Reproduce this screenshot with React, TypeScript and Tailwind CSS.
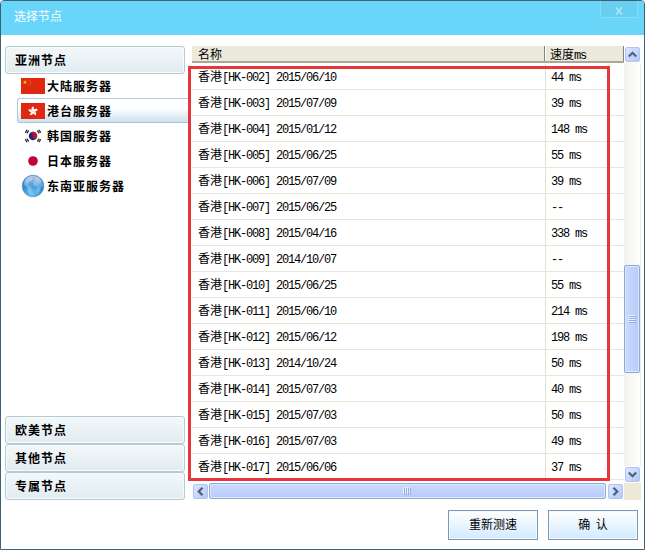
import React from "react";

const rows: [string, string, string][] = [
  ["002", "2015/06/10", "44 ms"],
  ["003", "2015/07/09", "39 ms"],
  ["004", "2015/01/12", "148 ms"],
  ["005", "2015/06/25", "55 ms"],
  ["006", "2015/07/09", "39 ms"],
  ["007", "2015/06/25", "--"],
  ["008", "2015/04/16", "338 ms"],
  ["009", "2014/10/07", "--"],
  ["010", "2015/06/25", "55 ms"],
  ["011", "2015/06/10", "214 ms"],
  ["012", "2015/06/12", "198 ms"],
  ["013", "2014/10/24", "50 ms"],
  ["014", "2015/07/03", "40 ms"],
  ["015", "2015/07/03", "50 ms"],
  ["016", "2015/07/03", "49 ms"],
  ["017", "2015/06/06", "37 ms"],
];

function Mono({ children }: { children: React.ReactNode }) {
  return (
    <span className="whitespace-pre font-['Liberation_Mono',monospace] text-[12px] tracking-[-1.2px]">{children}</span>
  );
}

function GroupHeader({ label }: { label: string }) {
  return (
    <div className="flex h-7 w-[180px] shrink-0 items-center rounded-[3px] border border-[#b5cad3] bg-linear-to-b from-[#f3f8fa] to-[#e1ebf0] pb-px pl-[9px] text-[12px] font-bold tracking-[1px] shadow-[inset_0_0_0_1px_#f8fbfc]">
      {label}
    </div>
  );
}

function ChinaFlag() {
  return (
    <svg width="24" height="16" viewBox="0 0 24 16">
      <rect width="24" height="16" fill="#df2810" />
      <path d="M4 2l.7 1.5 1.6.1-1.2 1 .4 1.6L4 5.3l-1.5.9.4-1.6-1.2-1 1.6-.1z" fill="#f6b515" />
      <path d="M7.5 1.5h1v1h-1zM9 3h1v1H9zM9 5h1v1H9zM7.5 6.5h1v1h-1z" fill="#ec8a18" />
    </svg>
  );
}

function HongKongFlag() {
  return (
    <svg width="24" height="16" viewBox="0 0 24 16">
      <rect width="24" height="16" fill="#df2810" />
      <g fill="#fff" transform="translate(12 8.2)">
        {[0, 72, 144, 216, 288].map((a) => (
          <path key={a} d="M0 0C-2.2-1.5-2-4.2.6-5 .1-3.8 1.6-3 .9-1.2z" transform={`rotate(${a})`} />
        ))}
      </g>
      <g fill="#df2810">
        <circle cx="12" cy="5.8" r=".35" />
        <circle cx="14.1" cy="7.5" r=".35" />
        <circle cx="13.4" cy="10" r=".35" />
        <circle cx="10.6" cy="10" r=".35" />
        <circle cx="9.9" cy="7.5" r=".35" />
      </g>
    </svg>
  );
}

function KoreaFlag() {
  return (
    <svg width="24" height="16" viewBox="0 0 24 16">
      <rect width="24" height="16" fill="#fff" />
      <g transform="rotate(18 12 8)">
        <circle cx="12" cy="8" r="4.2" fill="#142f78" />
        <path d="M7.8 8a4.2 4.2 0 0 1 8.4 0 2.1 2.1 0 0 1-4.2 0 2.1 2.1 0 0 0-4.2 0z" fill="#c8102e" />
      </g>
      <path
        d="M4.2 4.6l2-2.8M5.7 5.4l2-2.8M16.3 2.6l2 2.8M17.8 1.8l2 2.8M4.2 11.4l2 2.8M5.7 10.6l2 2.8M16.3 13.4l2-2.8M17.8 14.2l2-2.8"
        stroke="#111"
        strokeWidth="1.1"
      />
    </svg>
  );
}

function JapanFlag() {
  return (
    <svg width="24" height="16" viewBox="0 0 24 16">
      <rect width="24" height="16" fill="#fff" />
      <circle cx="12" cy="8" r="4.8" fill="#bd0634" />
    </svg>
  );
}

function Globe() {
  return (
    <svg width="24" height="24" viewBox="0 0 24 24">
      <defs>
        <radialGradient id="sea" cx=".45" cy=".85" r=".85">
          <stop offset="0" stopColor="#74c8f4" />
          <stop offset=".55" stopColor="#3089d2" />
          <stop offset="1" stopColor="#3a74b4" />
        </radialGradient>
        <linearGradient id="shine" x1="0" y1="0" x2="0" y2="1">
          <stop offset="0" stopColor="#fff" stopOpacity=".6" />
          <stop offset="1" stopColor="#fff" stopOpacity=".05" />
        </linearGradient>
      </defs>
      <circle cx="12" cy="12" r="10.8" fill="url(#sea)" stroke="#568dbd" strokeWidth=".6" />
      <path d="M3 8l3-4 4-1 2 2-1 2-3 1-1 3 3 2 1 3-2 4-2-3-1-4-3-2zM13 4l4-1 4 4 1 5-2 1-1 4-3 3-1-4 1-3-3-1-1-4 2-2z" fill="#a4d9f5" opacity=".45" />
      <ellipse cx="12" cy="7.3" rx="8.3" ry="5.5" fill="url(#shine)" />
    </svg>
  );
}

function ServerItem({ icon, label, active }: { icon: React.ReactNode; label: string; active?: boolean }) {
  return (
    <div
      className={
        active
          ? "flex h-[25px] items-center rounded-l-[3px] border border-r-0 border-[#b8c9d5] border-b-[#a9c5dd] bg-linear-to-b from-white from-40% to-[#d0e0ef] pl-[3px]"
          : "flex h-[25px] items-center pl-1"
      }
    >
      <span className="flex w-6 shrink-0 justify-center">{icon}</span>
      <span className="ml-0.5 whitespace-nowrap text-[12px] leading-4 font-bold tracking-[1px]">{label}</span>
    </div>
  );
}

function ScrollButton({ turn }: { turn: string }) {
  return (
    <div className="flex size-[17px] shrink-0 items-center justify-center bg-white">
      <div className="flex size-[15px] items-center justify-center rounded-[2px] border border-[#b1c4ee] bg-linear-to-br from-[#dce6ff] to-[#b5c9f8]">
        <svg width="9" height="9" viewBox="0 0 9 9" className={turn}>
          <path d="M.8 6.5l3.7-3.7 3.7 3.7" fill="none" stroke="#4d6185" strokeWidth="2.3" />
        </svg>
      </div>
    </div>
  );
}

export default function App() {
  return (
    <div className="flex h-[550px] w-[645px] flex-col overflow-hidden rounded-t-[4px] border border-[#3a6476] bg-white font-['Noto_Sans_CJK_SC',sans-serif] text-[12px] text-black">
      <header className="flex h-[34px] shrink-0 items-start justify-between bg-[#69d6f9]">
        <h1 className="pt-[5px] pl-[13px] text-[12px] leading-[19px] font-normal text-white">选择节点</h1>
        <button className="mr-[6px] flex h-[17px] w-[38px] items-center justify-center border border-t-0 border-[#83def9] bg-[#68cff0] pt-[3px]">
          <svg width="8" height="8" viewBox="0 0 8 8">
            <path d="M1 .5l6 7M7 .5l-6 7" stroke="#a9e8fb" strokeWidth="1.7" />
          </svg>
        </button>
      </header>

      <main className="flex h-[465px] shrink-0 pt-[11px] pl-1">
        <aside className="flex w-[183px] shrink-0 flex-col">
          <GroupHeader label="亚洲节点" />
          <div className="-mt-px flex flex-1 flex-col pl-3">
            <ServerItem icon={<ChinaFlag />} label="大陆服务器" />
            <ServerItem icon={<HongKongFlag />} label="港台服务器" active />
            <ServerItem icon={<KoreaFlag />} label="韩国服务器" />
            <ServerItem icon={<JapanFlag />} label="日本服务器" />
            <ServerItem icon={<Globe />} label="东南亚服务器" />
          </div>
          <GroupHeader label="欧美节点" />
          <GroupHeader label="其他节点" />
          <GroupHeader label="专属节点" />
        </aside>

        <section className="relative flex w-[453px] shrink-0 flex-col pl-1">
          <div className="flex h-[437px] shrink-0">
            <div className="w-[432px] shrink-0 overflow-hidden">
              <div className="flex h-[17px] border-b-2 border-[#aaa797] bg-[#ebe9dc] leading-[15px]">
                <div className="w-[353px] border-r border-[#858476] pl-[6px]">名称</div>
                <div className="flex-1 border-r border-l border-[#858476] border-l-white pl-1">
                  速度<Mono>ms</Mono>
                </div>
              </div>
              <div className="pt-px">
                {rows.map(([id, date, speed]) => (
                  <div key={id} className="flex h-[26px] border-b border-[#e9e6da] leading-6">
                    <div className="w-[354px] border-r border-[#e3e1d2] pl-[6px]">
                      香港<Mono>{`[HK-${id}] ${date}`}</Mono>
                    </div>
                    <div className="pl-[5px]">
                      <Mono>{speed}</Mono>
                    </div>
                  </div>
                ))}
              </div>
            </div>
            <div className="flex w-[17px] flex-col border-r border-[#eeede5] bg-linear-to-r from-[#f3f1ec] to-[#fefefb]">
              <ScrollButton turn="" />
              <div className="mt-[202px] flex h-[108px] items-center justify-center rounded-[2px] border border-[#8fa9d4] bg-linear-to-r from-[#cbdafe] to-[#b8cbf9] shadow-[inset_0_0_0_1px_#dfe8ff]">
                <div className="flex w-[7px] flex-col gap-px">
                  {[0, 1, 2, 3].map((n) => (
                    <i key={n} className="h-px bg-[#8cabe7] shadow-[-1px_-1px_0_#eef4ff]" />
                  ))}
                </div>
              </div>
              <div className="mt-auto">
                <ScrollButton turn="rotate-180" />
              </div>
            </div>
          </div>
          <div className="flex h-[17px] w-[449px] bg-[#ece9d8]">
            <div className="flex w-[432px] bg-white">
              <ScrollButton turn="-rotate-90" />
              <div className="flex h-4 w-[397px] items-center justify-center rounded-[2px] border border-[#8fa9d4] bg-linear-to-b from-[#cbdafe] to-[#b8cbf9] shadow-[inset_0_0_0_1px_#dfe8ff]">
                <div className="flex h-[7px] gap-px">
                  {[0, 1, 2, 3].map((n) => (
                    <i key={n} className="w-px bg-[#8cabe7] shadow-[-1px_-1px_0_#eef4ff]" />
                  ))}
                </div>
              </div>
              <div className="ml-auto">
                <ScrollButton turn="rotate-90" />
              </div>
            </div>
          </div>
          <div className="pointer-events-none absolute top-5 left-0 h-[415px] w-[422px] border-[3px] border-[#e6373d]" />
        </section>
      </main>

      <footer className="flex justify-end gap-[10px] pt-[10px] pr-[6px]">
        {["重新测速", "确 认"].map((label) => (
          <button
            key={label}
            className="h-[30px] w-[90px] border border-[#7898b4] bg-linear-to-b from-white to-[#d2eafe] pb-0.5 text-[12px] whitespace-pre shadow-[inset_0_0_0_1px_#f4faff] [word-spacing:3px]"
          >
            {label}
          </button>
        ))}
      </footer>
    </div>
  );
}
